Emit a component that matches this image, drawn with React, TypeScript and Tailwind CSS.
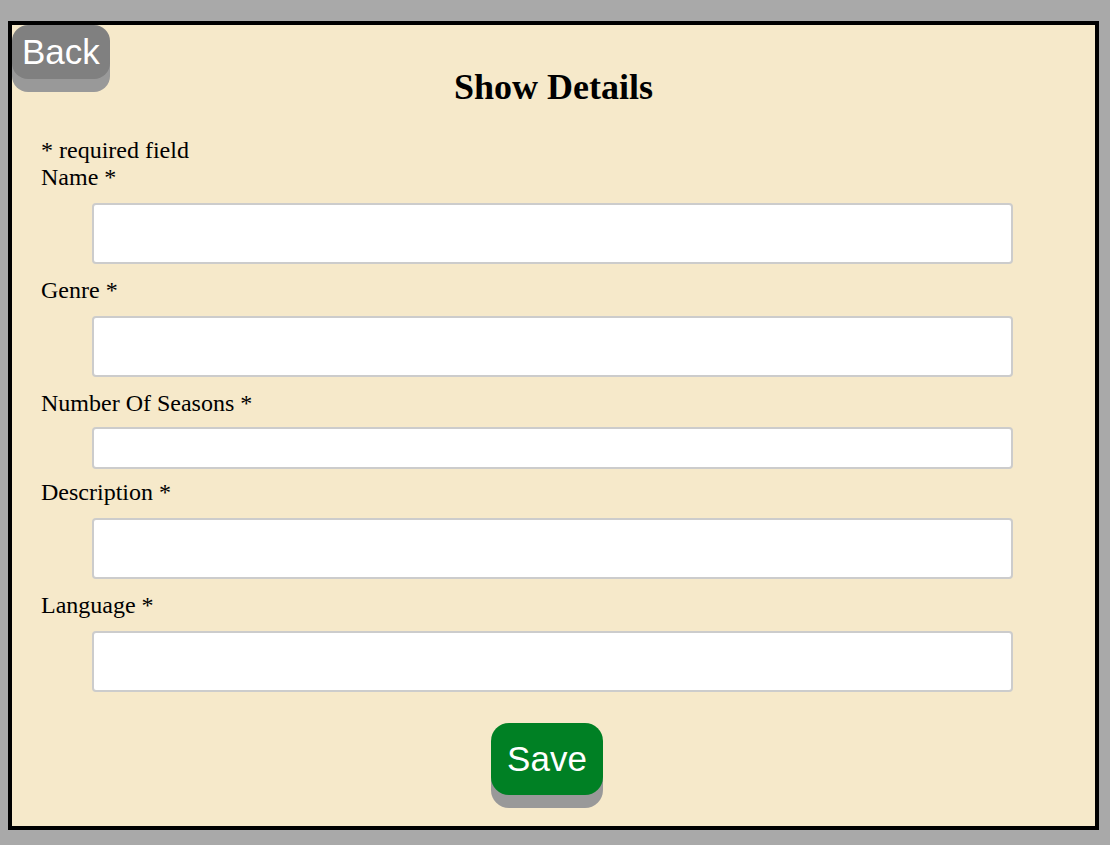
import React from "react";

const fields: { label: string; h: string; mt: string; mb: string }[] = [
  { label: "Name *", h: "h-[61px]", mt: "mt-[12px]", mb: "mb-[13px]" },
  { label: "Genre *", h: "h-[61px]", mt: "mt-[12px]", mb: "mb-[13px]" },
  { label: "Number Of Seasons *", h: "h-[42px]", mt: "mt-[10px]", mb: "mb-[10px]" },
  { label: "Description *", h: "h-[61px]", mt: "mt-[12px]", mb: "mb-[13px]" },
  { label: "Language *", h: "h-[61px]", mt: "mt-[12px]", mb: "mb-0" },
];

export default function App() {
  return (
    <div className="min-h-screen bg-[#a9a9a9] pt-[21px] pl-[8px] pb-[14px]">
      <div className="relative w-[1091px] h-[809px] border-4 border-black bg-[#f6e9ca] [font-family:'Liberation_Serif',serif] text-black">
        <button className="absolute left-0 top-0 rounded-[16px] bg-[#808080] px-[10px] py-[6px] text-[35px] leading-[42px] text-white shadow-[0_13px_0_#999999] [font-family:'Liberation_Sans',Arial,sans-serif]">
          Back
        </button>
        <h2 className="pt-[44px] text-center text-[36px] leading-[37px] font-bold">Show Details</h2>
        <div className="mt-[31px] px-[29px] text-[24px] leading-[27px]">
          <div>* required field</div>
          {fields.map((f) => (
            <div key={f.label}>
              <div>{f.label}</div>
              <input
                type="text"
                className={`block ml-[51px] w-[921px] ${f.h} ${f.mt} ${f.mb} rounded-[4px] border-2 border-[#cccccc] bg-white`}
              />
            </div>
          ))}
          <div className="mt-[31px] flex justify-center pr-[13px]">
            <button className="rounded-[18px] bg-[#008024] px-[16px] py-[16px] text-[35px] leading-[40px] text-white shadow-[0_13px_0_#999999] [font-family:'Liberation_Sans',Arial,sans-serif]">
              Save
            </button>
          </div>
        </div>
      </div>
    </div>
  );
}
